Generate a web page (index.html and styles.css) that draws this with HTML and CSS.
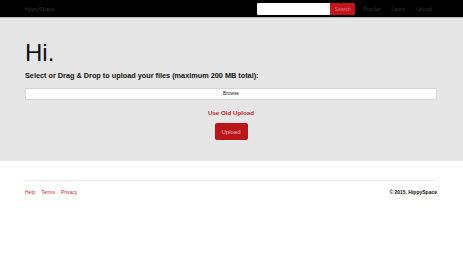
FILE: index.html
```html
<!DOCTYPE html>
<html>
<head>
<meta charset="utf-8">
<link rel="stylesheet" href="styles.css">
</head>
<body>
<nav class="navbar">
  <div class="container nav-inner">
    <a class="brand">HippySpace</a>
    <div class="nav-right">
      <form class="search">
        <input class="search-input" type="text">
        <button class="search-btn" type="button">Search</button>
      </form>
      <a class="nav-link">Popular</a>
      <a class="nav-link">Latest</a>
      <a class="nav-link">Upload</a>
    </div>
  </div>
</nav>
<section class="jumbotron">
  <div class="container">
    <h1 class="title">Hi.</h1>
    <p class="lead">Select or Drag &amp; Drop to upload your files (maximum 200 MB total):</p>
    <div class="browse">Browse</div>
    <div class="center">
      <a class="old-upload">Use Old Upload</a>
      <button class="upload-btn" type="button">Upload</button>
    </div>
  </div>
</section>
<footer class="container footer">
  <div class="footer-row">
    <div class="footer-links">
      <a>Help</a><a>Terms</a><a>Privacy</a>
    </div>
    <div class="copy">© 2015, HippySpace</div>
  </div>
</footer>
</body>
</html>
```
FILE: styles.css
```css
* { box-sizing: border-box; }
html, body { margin: 0; padding: 0; background: #fff; }
body { font-family: "Liberation Sans", Arial, sans-serif; color: #111; }
a { text-decoration: none; cursor: pointer; }

.container { width: 412px; margin-left: 25px; }

.navbar {
  height: 18px;
  background: #000;
  border-bottom: 1px solid #b8b8b8;
}
.nav-inner {
  height: 17px;
  display: flex;
  align-items: center;
  justify-content: space-between;
}
.brand { font-size: 5.5px; color: #333; margin-top: 1px; }
.nav-right { display: flex; align-items: center; margin-right: 5px; }
.search { display: flex; margin: 0 8px 0 0; }
.search-input {
  width: 73px; height: 12px; border: none; margin: 0 0 0 -1px; padding: 0;
  background: #fff; border-radius: 1px 0 0 1px;
}
.search-btn {
  width: 25px; height: 12px; border: none; margin: 0; padding: 0;
  background: #c0161c; color: #e0767a; font-family: inherit; font-size: 5px;
  border-radius: 0 1px 1px 0;
}
.nav-link { font-size: 5px; color: #333; margin-right: 11px; }
.nav-link:last-child { margin-right: 0; }

.jumbotron {
  background: #e6e6e6;
  height: 143px;
  padding-top: 22px;
}
.title {
  margin: 0;
  font-size: 24px;
  line-height: 26px;
  font-weight: normal;
  color: #111;
}
.lead {
  margin: 5px 0 0;
  font-size: 7.3px;
  line-height: 10px;
  font-weight: bold;
  color: #111;
}
.browse {
  margin-top: 7px;
  height: 12px;
  background: #fff;
  border: 1px solid #d6d6d6;
  border-radius: 1px;
  font-size: 4.8px;
  line-height: 10px;
  text-align: center;
  color: #222;
}
.center { display: flex; flex-direction: column; align-items: center; }
.old-upload {
  margin-top: 9px;
  font-size: 6.2px;
  line-height: 8px;
  font-weight: bold;
  color: #c8252b;
}
.upload-btn {
  margin-top: 6px;
  width: 33px; height: 17px;
  border: none; padding: 0;
  background: #b8161b;
  color: #f0b4b6;
  font-family: inherit;
  font-size: 6px;
  border-radius: 2px;
}

.footer {
  margin-top: 19px;
  border-top: 1px solid #ececec;
  padding-top: 8px;
}
.footer-row { display: flex; justify-content: space-between; align-items: center; }
.footer-links { display: flex; gap: 6px; }
.footer-links a { font-size: 5px; color: #c8252b; }
.copy { font-size: 5px; font-weight: bold; color: #111; }
```
